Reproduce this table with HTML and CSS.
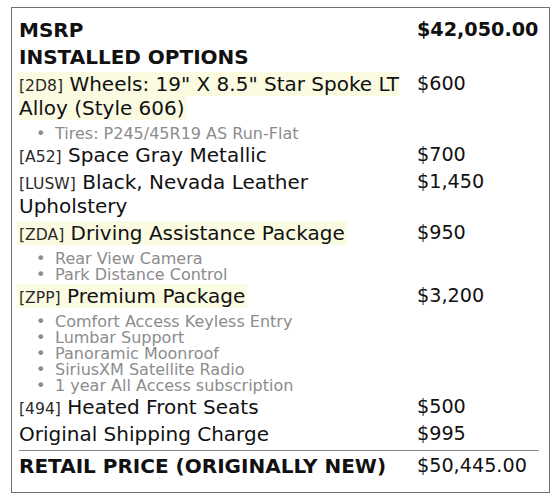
FILE: index.html
```html
<!DOCTYPE html>
<html>
<head>
<meta charset="utf-8">
<link rel="stylesheet" href="styles.css">
</head>
<body>
<div class="sticker">
  <div class="row strong"><div class="label">MSRP</div><div class="price">$42,050.00</div></div>
  <div class="row strong"><div class="label">INSTALLED OPTIONS</div></div>
  <div class="row">
    <div class="label"><span class="hl"><span class="code">[2D8]</span> Wheels: 19" X 8.5" Star Spoke LT Alloy (Style 606)</span>
      <ul class="sub"><li>Tires: P245/45R19 AS Run-Flat</li></ul>
    </div>
    <div class="price">$600</div>
  </div>
  <div class="row"><div class="label"><span class="code">[A52]</span> Space Gray Metallic</div><div class="price">$700</div></div>
  <div class="row"><div class="label"><span class="code">[LUSW]</span> Black, Nevada Leather Upholstery</div><div class="price">$1,450</div></div>
  <div class="row">
    <div class="label"><span class="hl"><span class="code">[ZDA]</span> Driving Assistance Package</span>
      <ul class="sub"><li>Rear View Camera</li><li>Park Distance Control</li></ul>
    </div>
    <div class="price">$950</div>
  </div>
  <div class="row">
    <div class="label"><span class="hl"><span class="code">[ZPP]</span> Premium Package</span>
      <ul class="sub"><li>Comfort Access Keyless Entry</li><li>Lumbar Support</li><li>Panoramic Moonroof</li><li>SiriusXM Satellite Radio</li><li>1 year All Access subscription</li></ul>
    </div>
    <div class="price">$3,200</div>
  </div>
  <div class="row"><div class="label"><span class="code">[494]</span> Heated Front Seats</div><div class="price">$500</div></div>
  <div class="row"><div class="label">Original Shipping Charge</div><div class="price">$995</div></div>
  <div class="row total"><div class="label strong">RETAIL PRICE (ORIGINALLY NEW)</div><div class="price">$50,445.00</div></div>
</div>
</body>
</html>
```
FILE: styles.css
```css
html, body {
  margin: 0;
  background: #fff;
}
body {
  font-family: "DejaVu Sans", "Noto Sans", sans-serif;
  color: #111;
  padding: 7px 0 0 11px;
}
.sticker {
  width: 539px;
  box-sizing: border-box;
  border: 1px solid #6f6f6f;
  padding: 9px 10px 12px 7px;
}
.row {
  display: grid;
  grid-template-columns: 398px 1fr;
  padding: 1px 0 2px;
  font-size: 20px;
  line-height: 24px;
}
.price {
  font-size: 19.2px;
}
.strong {
  font-weight: bold;
}
.code {
  font-size: 15.6px;
  line-height: 16px;
  color: #2a2a2a;
}
.hl {
  background: #fbfbe2;
  padding: 0 2px;
  margin-left: -2px;
}
.sub {
  list-style: none;
  margin: 6px 0 -2px;
  padding-left: 17px;
  font-size: 16px;
  line-height: 16px;
  color: #8c8c8c;
}
.sub li {
  display: flex;
}
.sub li::before {
  content: "•";
  width: 19px;
  flex: none;
}
.total {
  border-top: 1px solid #8a8a8a;
  margin-top: 2px;
  padding-top: 3px;
}
```
